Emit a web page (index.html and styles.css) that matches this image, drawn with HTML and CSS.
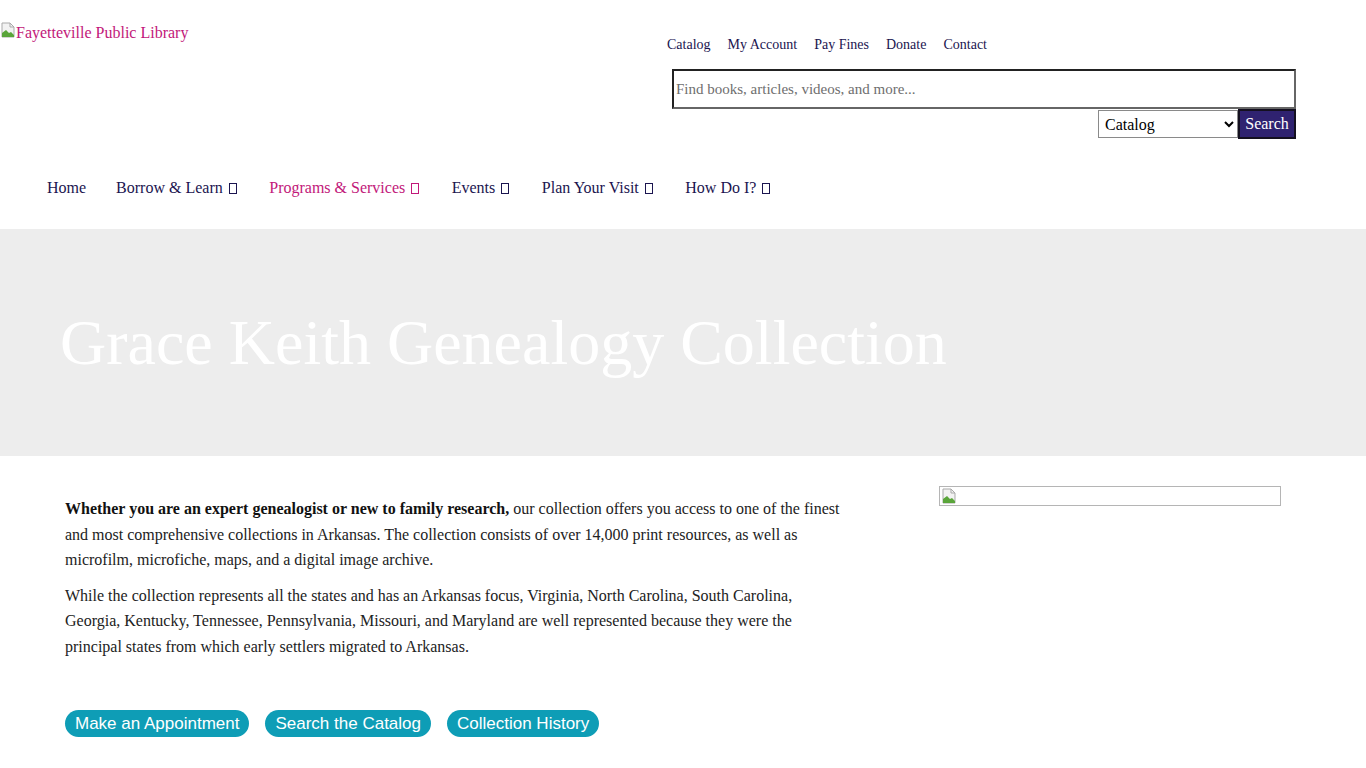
FILE: index.html
```html
<!DOCTYPE html>
<html>
<head>
<meta charset="utf-8">
<title>Grace Keith Genealogy Collection</title>
<link rel="stylesheet" href="styles.css">
</head>
<body>
<header class="site-header">
  <div class="header-top">
    <a class="logo" href="#">
      <span class="broken-img"><svg width="16" height="16" viewBox="0 0 16 16"><path d="M2 1h8l4 4v10H2z" fill="#f2f2f2" stroke="#a9a9a9"/><path d="M2 11l4-3 3 3 2-1 3 3v2H2z" fill="#5aa53a"/><path d="M10 1v4h4" fill="none" stroke="#a9a9a9"/></svg></span>Fayetteville Public Library
    </a>
    <div class="header-right">
      <nav class="util-nav">
        <a href="#">Catalog</a>
        <a href="#">My Account</a>
        <a href="#">Pay Fines</a>
        <a href="#">Donate</a>
        <a href="#">Contact</a>
      </nav>
      <form class="search-form">
        <input class="search-input" type="text" placeholder="Find books, articles, videos, and more...">
        <div class="search-row">
          <select class="search-select"><option>Catalog</option></select>
          <button class="search-btn" type="button">Search</button>
        </div>
      </form>
    </div>
  </div>
  <nav class="main-nav">
    <a href="#">Home</a>
    <a href="#">Borrow &amp; Learn <span class="tofu"></span></a>
    <a href="#" class="active">Programs &amp; Services <span class="tofu"></span></a>
    <a href="#">Events <span class="tofu"></span></a>
    <a href="#">Plan Your Visit <span class="tofu"></span></a>
    <a href="#">How Do I? <span class="tofu"></span></a>
  </nav>
</header>
<section class="hero">
  <h1>Grace Keith Genealogy Collection</h1>
</section>
<main class="content">
  <div class="main-col">
    <p><strong>Whether you are an expert genealogist or new to family research,</strong> our collection offers you access to one of the finest and most comprehensive collections in Arkansas. The collection consists of over 14,000 print resources, as well as microfilm, microfiche, maps, and a digital image archive.</p>
    <p>While the collection represents all the states and has an Arkansas focus, Virginia, North Carolina, South Carolina, Georgia, Kentucky, Tennessee, Pennsylvania, Missouri, and Maryland are well represented because they were the principal states from which early settlers migrated to Arkansas.</p>
    <div class="buttons">
      <a class="pill" href="#">Make an Appointment</a>
      <a class="pill" href="#">Search the Catalog</a>
      <a class="pill" href="#">Collection History</a>
    </div>
  </div>
  <aside class="side-col">
    <div class="img-box"><svg width="16" height="16" viewBox="0 0 16 16"><path d="M2 1h8l4 4v10H2z" fill="#f2f2f2" stroke="#a9a9a9"/><path d="M2 11l4-3 3 3 2-1 3 3v2H2z" fill="#5aa53a"/><path d="M10 1v4h4" fill="none" stroke="#a9a9a9"/></svg></div>
  </aside>
</main>
</body>
</html>
```
FILE: styles.css
```css
* { box-sizing: border-box; }
body {
  margin: 0;
  font-family: "Liberation Serif", "Times New Roman", serif;
  color: #222;
  background: #fff;
}
a { text-decoration: none; }

.site-header { padding: 0; }
.header-top {
  display: flex;
  justify-content: space-between;
  align-items: flex-start;
  height: 166px;
}
.logo {
  display: flex;
  align-items: flex-start;
  margin-top: 24px;
  color: #c2187a;
  font-size: 16px;
  line-height: 18px;
}
.broken-img { display: inline-block; width: 16px; height: 16px; margin-top: -2px; }
.header-right {
  width: 630px;
  margin-right: 70px;
  padding-top: 36px;
}
.util-nav {
  display: flex;
  gap: 17px;
  padding-left: 1px;
  font-size: 14px;
  line-height: 18px;
}
.util-nav a { color: #1b1550; }
.search-form { margin-top: 15px; margin-left: 6px; }
.search-input {
  display: block;
  width: 624px;
  height: 40px;
  border: 2px solid #222;
  border-bottom-color: #666;
  border-right-color: #666;
  padding: 0 2px;
  font-family: "Liberation Serif", serif;
  font-size: 15px;
  color: #333;
  outline: none;
}
.search-input::placeholder { color: #6e6e6e; }
.search-row {
  display: flex;
  justify-content: flex-end;
  margin-top: 1px;
}
.search-select {
  width: 140px;
  height: 28px;
  font-family: "Liberation Serif", serif;
  font-size: 16px;
  border: 1px solid #8a8a8a;
  background: #fff;
  color: #000;
  padding: 0 2px;
}
.search-btn {
  height: 30px;
  width: 58px;
  margin-top: -1px;
  background: #2f2270;
  color: #fff;
  border: 2px solid #141020;
  font-family: "Liberation Serif", serif;
  font-size: 16px;
  padding: 0;
}
.main-nav {
  display: flex;
  gap: 30px;
  padding-left: 47px;
  height: 63px;
  font-size: 16px;
  line-height: 44px;
}
.main-nav a { color: #1b1550; }
.main-nav a.active { color: #c2187a; }
.tofu {
  display: inline-block;
  width: 8px;
  height: 11px;
  border: 1px solid currentColor;
  margin-left: 2px;
  margin-right: 2.5px;
  vertical-align: -1px;
}
.hero {
  background: #ededed;
  height: 227px;
  padding: 74px 0 0 60px;
}
.hero h1 {
  margin: 0;
  font-weight: normal;
  color: #fff;
  font-size: 64px;
  line-height: 80px;
}
.content {
  display: flex;
  padding: 30px 85px 0 65px;
}
.main-col { width: 780px; }
.main-col p {
  margin: 10px 0 0;
  font-size: 16px;
  line-height: 25.5px;
  color: #222;
}
.main-col strong { color: #111; }
.buttons {
  display: flex;
  gap: 16px;
  margin-top: 51px;
}
.pill {
  display: inline-block;
  background: #0e9db6;
  color: #fff;
  font-family: "Liberation Sans", Arial, sans-serif;
  font-size: 17px;
  line-height: 27px;
  height: 27px;
  padding: 0 10px;
  border-radius: 14px;
}
.side-col {
  margin-left: auto;
  width: 342px;
}
.img-box {
  height: 20px;
  border: 1px solid #b5b5b5;
  padding: 1px 0 0 1px;
}
```
